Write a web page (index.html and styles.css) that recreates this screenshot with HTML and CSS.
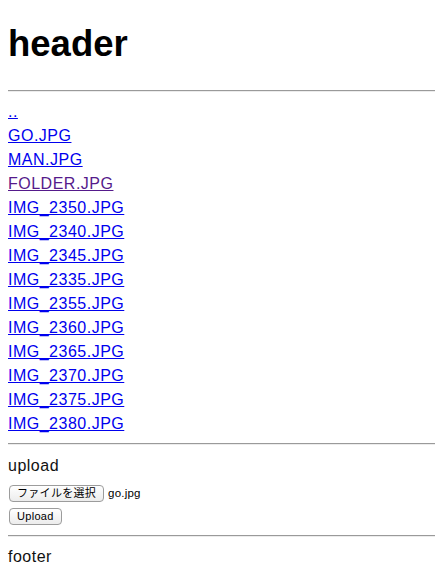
FILE: index.html
```html
<!DOCTYPE html>
<html lang="ja">
<head>
<meta charset="utf-8">
<title>header</title>
<link rel="stylesheet" href="styles.css">
</head>
<body>
<h1 class="title">header</h1>
<hr class="rule">
<div class="files">
  <a class="file" href="#">..</a>
  <a class="file" href="#">GO.JPG</a>
  <a class="file" href="#">MAN.JPG</a>
  <a class="file visited" href="#">FOLDER.JPG</a>
  <a class="file" href="#">IMG_2350.JPG</a>
  <a class="file" href="#">IMG_2340.JPG</a>
  <a class="file" href="#">IMG_2345.JPG</a>
  <a class="file" href="#">IMG_2335.JPG</a>
  <a class="file" href="#">IMG_2355.JPG</a>
  <a class="file" href="#">IMG_2360.JPG</a>
  <a class="file" href="#">IMG_2365.JPG</a>
  <a class="file" href="#">IMG_2370.JPG</a>
  <a class="file" href="#">IMG_2375.JPG</a>
  <a class="file" href="#">IMG_2380.JPG</a>
</div>
<hr class="rule">
<section class="upload">
  <div class="upload-label">upload</div>
  <form class="upload-form">
    <div class="file-row">
      <button type="button" class="btn">ファイルを選択</button>
      <span class="file-name">go.jpg</span>
    </div>
    <div class="submit-row">
      <button type="button" class="btn">Upload</button>
    </div>
  </form>
</section>
<hr class="rule">
<div class="footer">footer</div>
</body>
</html>
```

FILE: styles.css
```css
html, body {
  background: #fff;
}
body {
  margin: 0;
  padding: 0 8px;
  font-family: "Liberation Sans", "Noto Sans CJK JP", sans-serif;
  font-size: 16px;
  line-height: 24px;
  letter-spacing: 0.5px;
  color: #000;
}
.title {
  font-size: 36.5px;
  font-weight: bold;
  line-height: 48px;
  letter-spacing: 0;
  margin: 20px 0 22px;
}
.rule {
  margin: 0;
  height: 0;
  border: 0;
  border-top: 1px solid #9a9a9a;
  border-bottom: 1px solid #ececec;
}
.files {
  padding: 8px 0 7px;
}
.file {
  display: block;
  width: fit-content;
  color: #0000ee;
  text-decoration: underline;
  text-decoration-thickness: 1px;
  text-underline-offset: 1px;
}
.file.visited {
  color: #551a8b;
}
.upload {
  padding: 9px 0 10px;
}
.upload-label {
  color: #111;
}
.upload-form {
  display: flex;
  flex-direction: column;
  gap: 6px;
  margin-top: 7px;
}
.file-row, .submit-row {
  display: flex;
  align-items: center;
  gap: 4px;
  padding-left: 1px;
}
.btn {
  font-family: "Liberation Sans", "Noto Sans CJK JP", sans-serif;
  font-size: 11px;
  line-height: 13px;
  letter-spacing: 0.3px;
  height: 17px;
  padding: 1px 7px;
  border: 1px solid #9c9c9c;
  border-radius: 4px;
  background: linear-gradient(#ffffff, #ececec);
  color: #000;
}
.file-name {
  font-size: 11.5px;
  line-height: 13px;
  letter-spacing: 0.2px;
  color: #000;
}
.footer {
  padding-top: 8px;
  color: #111;
}
```
